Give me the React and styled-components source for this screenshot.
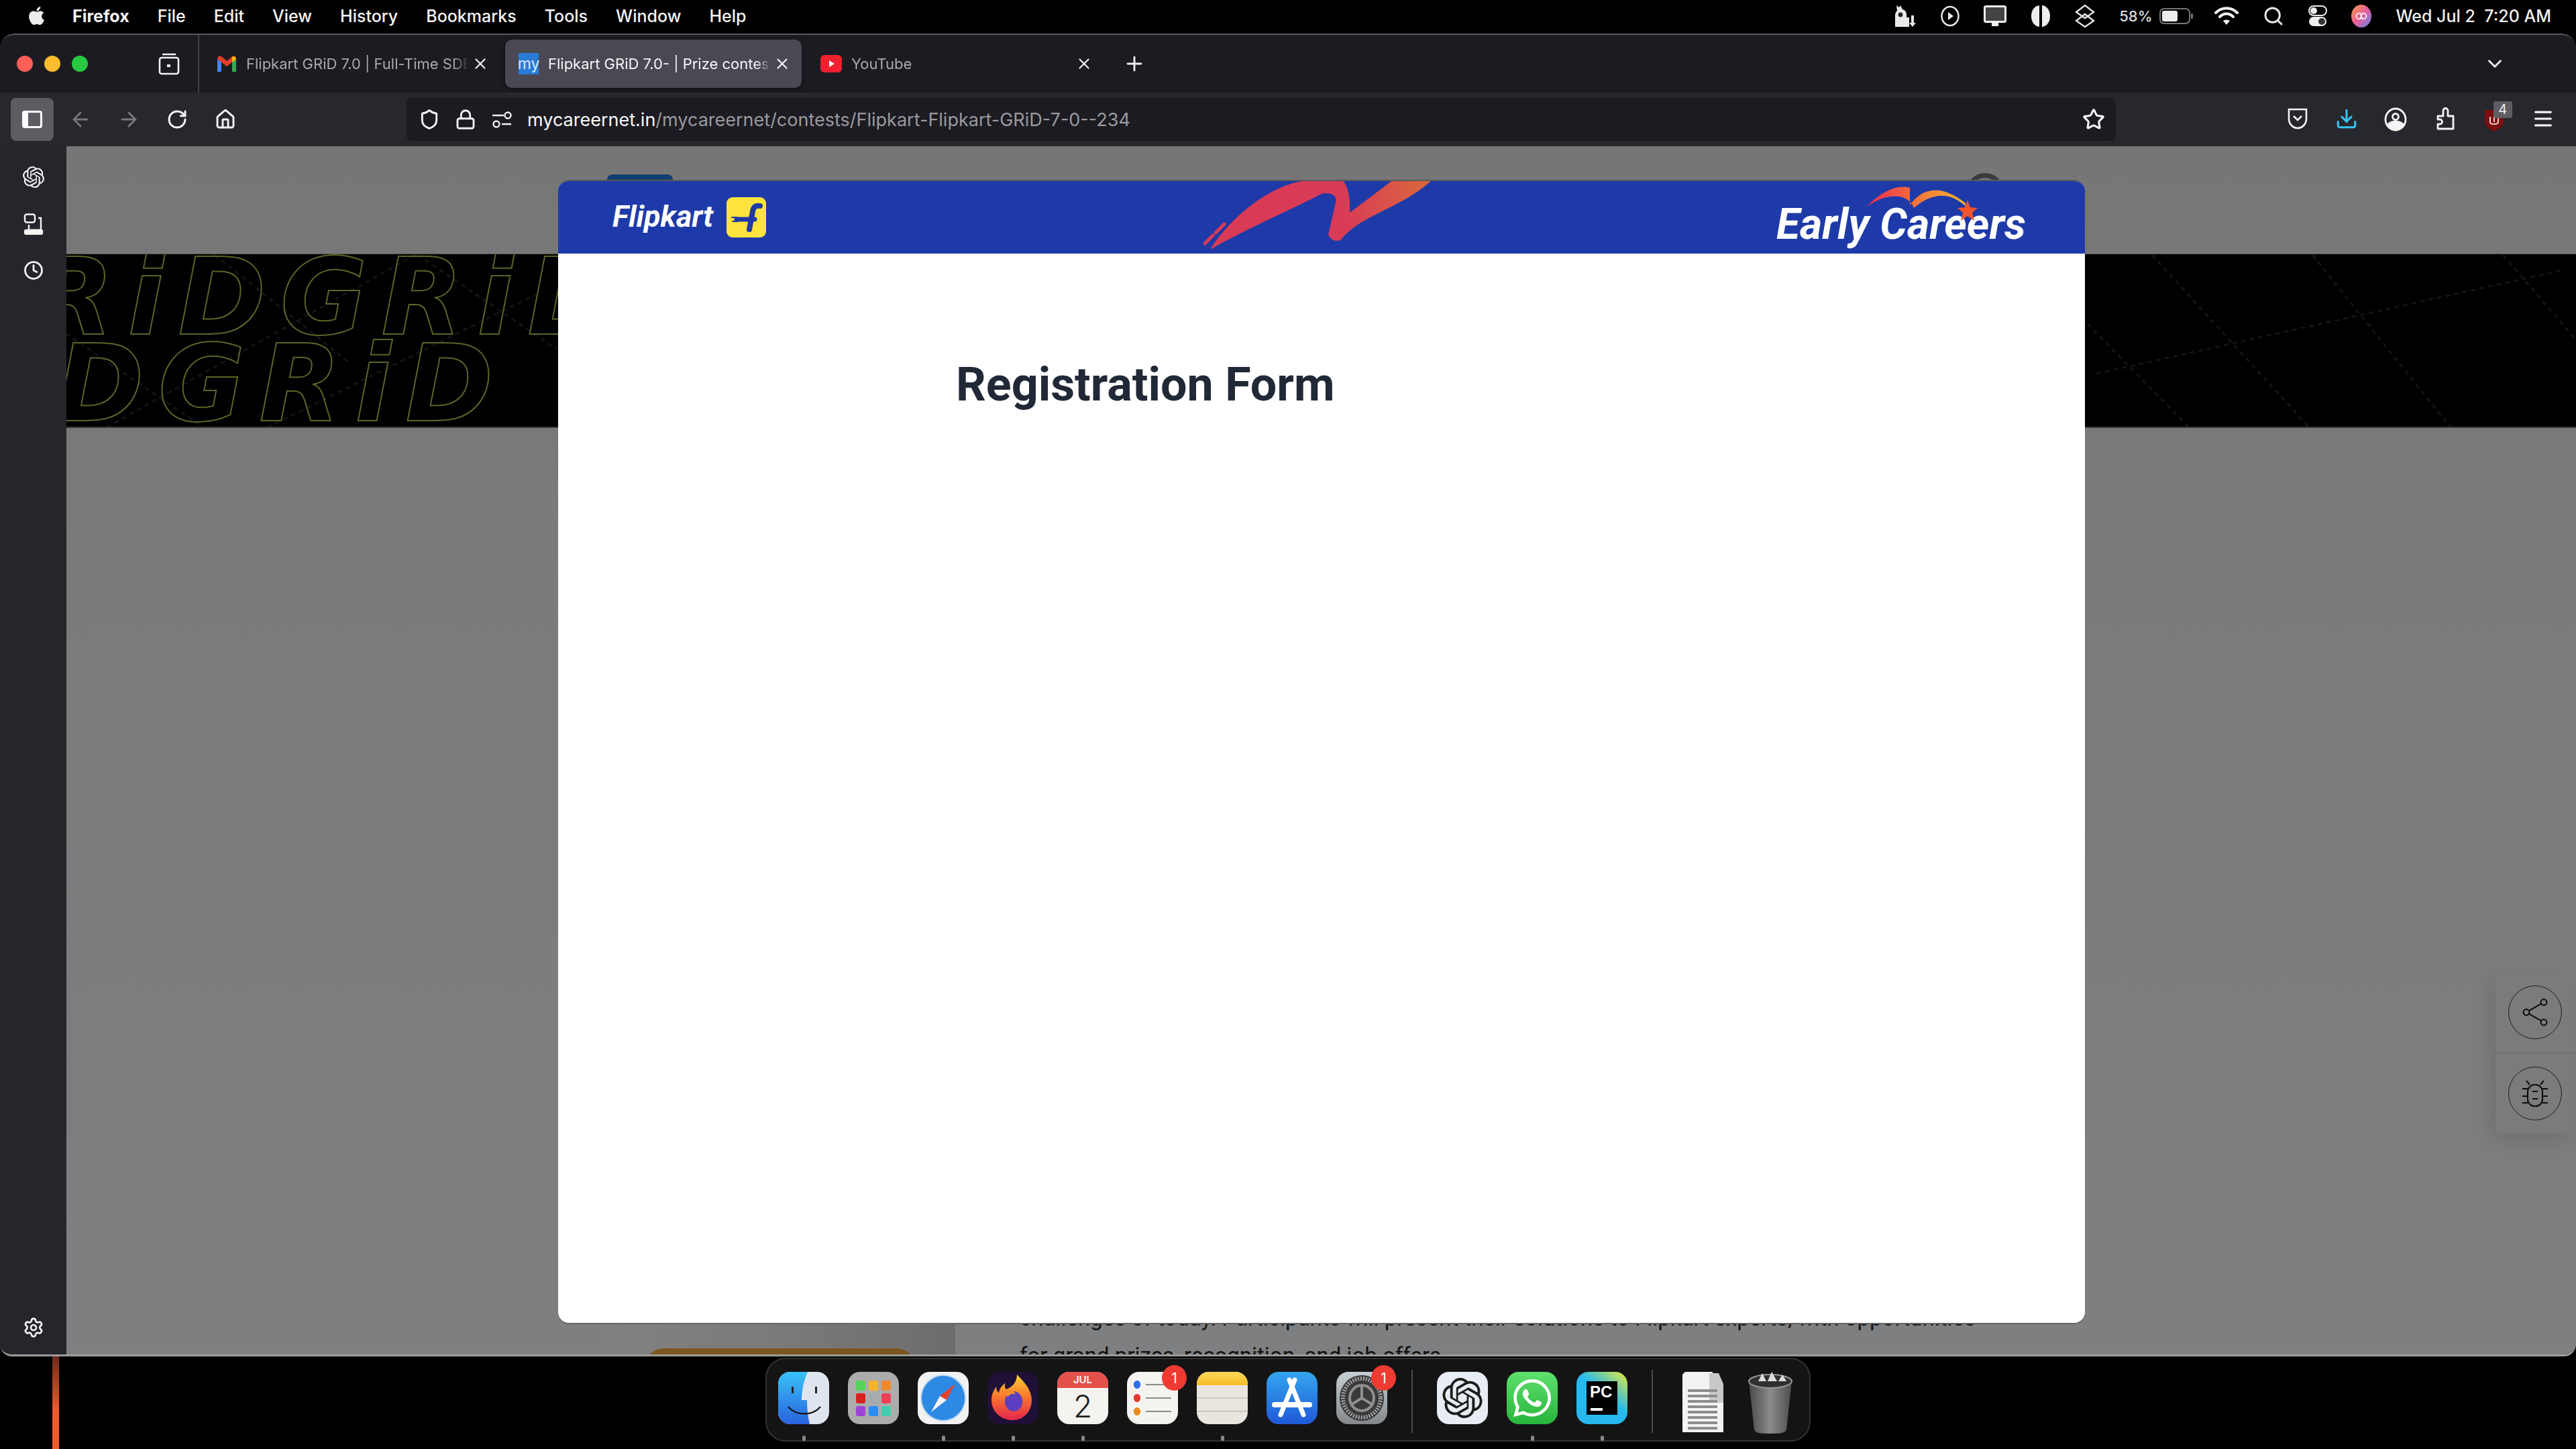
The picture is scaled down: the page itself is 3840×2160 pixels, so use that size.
import React from 'react'
import styled, { createGlobalStyle } from 'styled-components'
import {
  ArrowLeft, ArrowRight, RotateCw, Home, Shield, Lock, Star, X, Plus, ChevronDown,
  Download, Menu, Search, Clock, Settings,
} from 'lucide-react'
import { FaApple, FaWhatsapp } from 'react-icons/fa'
import { SiOpenai } from 'react-icons/si'

const GlobalStyle = createGlobalStyle`
  html, body { margin: 0; padding: 0; background: #000; }
  * { box-sizing: border-box; }
  body { font-family: Inter, "Liberation Sans", sans-serif; }
`

const Desktop = styled.div`
  width: 3840px;
  height: 2160px;
  background: #000;
  display: flex;
  flex-direction: column;
  overflow: hidden;
  position: relative;
`

// mac menu bar
const MenuBar = styled.div`
  height: 50px;
  flex: none;
  display: flex;
  align-items: center;
  padding-bottom: 3px;
  color: #f4f4f4;
  font-size: 25px;
  font-weight: 500;
`
const AppleMark = styled.div`
  width: 108px;
  padding-left: 39px;
  display: flex;
  font-size: 31px;
  color: #eee;
`
const MenuItems = styled.div`
  display: flex;
  gap: 42px;
`
const MenuLabel = styled.span`
  font-weight: ${p => (p.$bold ? 700 : 500)};
`
const StatusArea = styled.div`
  margin-left: auto;
  padding-right: 37px;
  display: flex;
  align-items: center;
  gap: 36px;
  color: #e8e8e8;
`
const BatteryGroup = styled.div`
  display: flex;
  align-items: center;
  gap: 11px;
  font-size: 22px;
  color: #ddd;
`
const BatteryBody = styled.div`
  width: 46px;
  height: 24px;
  border: 2px solid #777;
  border-radius: 7px;
  padding: 2px;
  position: relative;
  &::after {
    content: '';
    position: absolute;
    right: -6px;
    top: 6px;
    width: 3px;
    height: 8px;
    border-radius: 2px;
    background: #777;
  }
`
const BatteryFill = styled.div`
  height: 100%;
  border-radius: 3px;
  background: #eee;
`
const Clockface = styled.span`
  font-size: 25px;
  white-space: pre;
  color: #eee;
`

// browser window
const BrowserWindow = styled.div`
  flex: none;
  height: 1972px;
  display: flex;
  flex-direction: column;
  border-radius: 22px 22px 18px 18px;
  border-top: 2px solid #5a5a5e;
  border-bottom: 3px solid #9c9c9c;
  overflow: hidden;
  background: #1c1b22;
`
const TabStrip = styled.div`
  height: 86px;
  flex: none;
  display: flex;
  align-items: center;
  background: #1c1b22;
`
const WindowControls = styled.div`
  width: 297px;
  height: 100%;
  flex: none;
  border-right: 2px solid #3e3e44;
  display: flex;
  align-items: center;
  padding-left: 25px;
  gap: 17px;
`
const Light = styled.span`
  width: 24px;
  height: 24px;
  border-radius: 50%;
  background: ${p => p.$color};
`
const ViewIcon = styled.div`
  margin-left: 88px;
  display: flex;
  color: #f2f2f2;
`
const Tabs = styled.div`
  display: flex;
  align-items: center;
  gap: 8px;
  padding-left: 6px;
`
const Tab = styled.div`
  width: 442px;
  height: 72px;
  display: flex;
  align-items: center;
  padding: 0 16px 0 20px;
  gap: 14px;
  border-radius: 10px;
  font-size: 22px;
  background: ${p => (p.$active ? '#4a4953' : 'transparent')};
  color: ${p => (p.$active ? '#f6f6f6' : '#a9a9ad')};
  box-shadow: ${p => (p.$active ? '0 2px 6px rgba(0,0,0,.5)' : 'none')};
`
const TabTitle = styled.span`
  flex: 1;
  min-width: 0;
  overflow: hidden;
  white-space: nowrap;
  -webkit-mask-image: linear-gradient(90deg, #000 93%, transparent);
  mask-image: linear-gradient(90deg, #000 93%, transparent);
`
const TabClose = styled.span`
  margin-left: -10px;
  display: flex;
  color: #f2f2f2;
`
const FavSquare = styled.span`
  width: 30px;
  height: 32px;
  flex: none;
  display: flex;
  align-items: center;
  justify-content: center;
  color: #d8e8ff;
  font-size: 23px;
  background: #2a7bd6;
`
const NewTab = styled.div`
  margin-left: 29px;
  display: flex;
  color: #f0f0f0;
`
const TabListBtn = styled.div`
  margin-left: auto;
  padding-right: 104px;
  display: flex;
  color: #eee;
`
const Toolbar = styled.div`
  height: 80px;
  flex: none;
  display: flex;
  align-items: center;
  padding: 0 12px 0 16px;
  background: #27272e;
`
const SidebarToggle = styled.div`
  width: 64px;
  height: 64px;
  margin-right: 4px;
  border-radius: 8px;
  background: #5c5c63;
  display: flex;
  align-items: center;
  justify-content: center;
`
const ToggleGlyph = styled.div`
  width: 30px;
  height: 26px;
  border: 3px solid #fff;
  border-left-width: 9px;
  border-radius: 4px;
`
const ToolBtn = styled.div`
  width: 72px;
  display: flex;
  justify-content: center;
  color: ${p => (p.$dim ? '#77777d' : '#f4f4f4')};
`
const UrlBar = styled.div`
  flex: 1;
  height: 64px;
  margin: 0 234px;
  padding: 0 16px 0 7px;
  border-radius: 8px;
  background: #1c1b22;
  display: flex;
  align-items: center;
`
const UrlIcon = styled.div`
  width: 54px;
  display: flex;
  justify-content: center;
  color: #f0f0f0;
`
const UrlText = styled.div`
  margin-left: 11px;
  font-size: 27px;
  color: #9a9a9e;
  white-space: nowrap;
`
const UrlHost = styled.span`
  color: #f8f8f8;
`
const UrlStar = styled.div`
  margin-left: auto;
  display: flex;
  color: #f4f4f4;
`
const Extensions = styled.div`
  display: flex;
  flex: none;
  width: 440px;
`
const UblockBadge = styled.span`
  position: absolute;
  right: 10px;
  top: -9px;
  width: 28px;
  height: 25px;
  border-radius: 3px;
  background: #5f5f63;
  color: #eee;
  font-size: 20px;
  line-height: 25px;
  text-align: center;
`
const ExtBtn = styled.div`
  flex: 1;
  display: flex;
  justify-content: center;
  position: relative;
  color: ${p => p.$color || '#f4f4f4'};
`

const WindowBody = styled.div`
  flex: 1;
  min-height: 0;
  display: flex;
`
const Sidebar = styled.div`
  width: 99px;
  flex: none;
  background: #26252c;
  display: flex;
  flex-direction: column;
  align-items: center;
  padding-top: 30px;
  gap: 38px;
  color: #f4f4f4;
`
const SideGear = styled.div`
  margin-top: auto;
  padding-bottom: 24px;
  display: flex;
`

// dimmed page behind the modal
const Page = styled.div`
  flex: 1;
  min-width: 0;
  position: relative;
  overflow: hidden;
  display: flex;
  flex-direction: column;
  background: linear-gradient(#767676, #7a7a7a 30%, #7e7f81);
`
const PageTop = styled.div`
  height: 160px;
  flex: none;
  display: flex;
  align-items: flex-end;
  justify-content: space-between;
  padding: 0 853px 110px 806px;
`
const PeekLogo = styled.div`
  width: 98px;
  height: 8px;
  border-radius: 12px 12px 0 0;
  background: #0f3f6e;
`
const PeekAvatar = styled.div`
  width: 56px;
  height: 56px;
  margin-bottom: -46px;
  border: 7px solid #3a3a3a;
  border-radius: 50%;
`
const Hero = styled.div`
  height: 260px;
  flex: none;
  position: relative;
  overflow: hidden;
  background: #000;
  border-top: 1px solid #5c5c5c;
  border-bottom: 2px solid #3a3a3a;
`
const HeroLines = styled.svg`
  position: absolute;
  left: 0;
  top: 0;
`
const HeroRow = styled.div`
  height: 129px;
  margin-left: ${p => p.$shift}px;
  font-family: "DejaVu Sans", sans-serif;
  font-style: italic;
  font-weight: 700;
  font-size: 158px;
  line-height: 129px;
  letter-spacing: 21px;
  white-space: nowrap;
  color: transparent;
  -webkit-text-stroke: 2px #556727;
  position: relative;
`
const PageBody = styled.div`
  flex: 1;
  min-height: 0;
  display: flex;
  align-items: flex-end;
  padding-left: 804px;
  margin-bottom: -30px;
`
const SideCard = styled.div`
  width: 521px;
  height: 81px;
  flex: none;
  padding-left: 57px;
  background: linear-gradient(100deg, #818181, #7a7a7a 50%, #6c6c6c);
`
const OrangeBtn = styled.div`
  width: 406px;
  height: 60px;
  margin-top: 42px;
  border-radius: 30px 30px 0 0;
  background: #7c5620;
`
const BodyText = styled.div`
  margin-left: 96px;
  font-family: Roboto, sans-serif;
  font-size: 33px;
  line-height: 56px;
  color: #111;
  white-space: nowrap;
`
const FloatPanel = styled.div`
  position: absolute;
  right: 2px;
  top: 1231px;
  width: 118px;
  background: #7b7b7b;
  box-shadow: -6px 10px 30px rgba(0, 0, 0, .12);
`
const FloatCell = styled.div`
  height: 120px;
  display: flex;
  align-items: center;
  justify-content: center;
  & + & { border-top: 2px solid #707070; }
`
const FloatCircle = styled.div`
  width: 80px;
  height: 80px;
  border-radius: 50%;
  border: 1.5px solid #1b1b30;
  display: flex;
  align-items: center;
  justify-content: center;
`

// modal
const Modal = styled.div`
  position: absolute;
  left: 733px;
  top: 50px;
  width: 2276px;
  height: 1704px;
  background: #fff;
  border-radius: 16px;
  border-top: 2px solid #5a5a5a;
  overflow: hidden;
  box-shadow: 0 2px 0 #666;
`
const ModalHeader = styled.div`
  height: 108px;
  background: #1e3aa8;
  display: flex;
  align-items: center;
  padding: 0 88px 0 81px;
  position: relative;
  overflow: hidden;
`
const FlipkartWord = styled.span`
  font-family: Roboto, sans-serif;
  font-style: italic;
  font-weight: 700;
  font-size: 45px;
  margin-top: -3px;
  color: #fff;
`
const FlipkartBadge = styled.div`
  width: 59px;
  height: 60px;
  margin-left: 20px;
  border-radius: 9px;
  background: #ffe33f;
  display: flex;
`
const Swoosh = styled.svg`
  position: absolute;
  left: 952px;
  top: 0;
`
const CareersMark = styled.div`
  margin-left: auto;
  position: relative;
  padding-top: 22px;
  font-family: Roboto, sans-serif;
  font-style: italic;
  font-weight: 700;
  font-size: 64px;
  line-height: 70px;
  color: #fff;
  white-space: nowrap;
`
const CareersArc = styled.svg`
  position: absolute;
  left: 135px;
  top: 0;
`
const ModalContent = styled.div`
  padding: 153px 0 0 593px;
`
const Title = styled.h1`
  margin: 0;
  font-family: Roboto, sans-serif;
  font-weight: 700;
  font-size: 70px;
  line-height: 84px;
  color: #212936;
`

// dock
const DockArea = styled.div`
  flex: 1;
  display: flex;
  padding: 2px 0 0 1141px;
  position: relative;
`
const WallStripe = styled.div`
  position: absolute;
  left: 78px;
  top: 0;
  bottom: 0;
  width: 10px;
  background: linear-gradient(#6d2c1c, #f05a30 60%);
`
const Dock = styled.div`
  width: 1558px;
  height: 125px;
  padding: 19px 0 0 17px;
  display: flex;
  align-items: flex-start;
  gap: 28px;
  background: #141414;
  border: 2px solid #333;
  border-radius: 30px;
`
const DockItem = styled.div`
  width: ${p => p.$w || 76}px;
  flex: none;
  display: flex;
  flex-direction: column;
  align-items: center;
  position: relative;
`
const DockFace = styled.div`
  width: 100%;
  height: 78px;
  border-radius: 18px;
  overflow: hidden;
  display: flex;
  align-items: center;
  justify-content: center;
  background: ${p => p.$bg || 'transparent'};
  color: ${p => p.$color || '#fff'};
`
const RunDot = styled.span`
  width: 5px;
  height: 8px;
  margin-top: 17px;
  border-radius: 3px;
  background: #8a8a8a;
`
const NoticeBadge = styled.span`
  position: absolute;
  right: -13px;
  top: -10px;
  width: 37px;
  height: 38px;
  border-radius: 50%;
  background: #ee3b32;
  color: #fff;
  font-size: 21px;
  display: flex;
  align-items: center;
  justify-content: center;
`
const DockRule = styled.div`
  width: 2px;
  height: 94px;
  margin: -3px 8px 0 8px;
  background: #4a4a4a;
  flex: none;
`
const CalFace = styled.div`
  width: 100%;
  height: 100%;
  display: flex;
  flex-direction: column;
  background: #f4f3f0;
  color: #222;
`
const CalMonth = styled.div`
  height: 24px;
  background: #e5504a;
  color: #fff;
  font-size: 15px;
  font-weight: 600;
  text-align: center;
  line-height: 24px;
`
const CalDay = styled.div`
  flex: 1;
  font-size: 46px;
  font-weight: 300;
  text-align: center;
  line-height: 54px;
`
const PcSquare = styled.div`
  width: 46px;
  height: 50px;
  background: #000;
  color: #fff;
  font-family: "Liberation Sans", sans-serif;
  font-weight: 700;
  font-size: 24px;
  line-height: 26px;
  padding: 3px 0 0 5px;
  position: relative;
  &::after {
    content: '';
    position: absolute;
    left: 6px;
    bottom: 6px;
    width: 18px;
    height: 4px;
    background: #fff;
  }
`

const OllamaIcon = () => (
  <svg width="36" height="34" viewBox="0 0 36 34" fill="#e8e8e8">
    <path d="M4 33V16c0-4 2-6 3-7L6 1l4 3 2-3 3 6c4 1 6 4 6 8v4h4v14z" />
    <path d="M28 16v11h-3l5 6 5-6h-3V16z" />
    <circle cx="12" cy="15" r="3.4" fill="#222" />
  </svg>
)
const PlayCircle = () => (
  <svg width="28" height="32" viewBox="0 0 28 32" fill="none" stroke="#e8e8e8" strokeWidth="2.5">
    <ellipse cx="14" cy="16" rx="12.5" ry="14" />
    <path d="M11 10l8 6-8 6z" fill="#e8e8e8" stroke="none" />
  </svg>
)
const DisplayIcon = () => (
  <svg width="34" height="32" viewBox="0 0 34 32">
    <rect x="1.5" y="1.5" width="31" height="23" rx="2" fill="#444" stroke="#eee" strokeWidth="3" />
    <rect x="12" y="25" width="10" height="6" fill="#eee" />
  </svg>
)
const ContrastIcon = () => (
  <svg width="30" height="34" viewBox="0 0 30 34" fill="#eee">
    <path d="M13 1C5 2 1 9 1 17s4 15 12 16z" />
    <path d="M17 1c8 1 12 8 12 16s-4 15-12 16z" />
  </svg>
)
const LayerDiamonds = () => (
  <svg width="30" height="34" viewBox="0 0 30 34" fill="none" stroke="#e4e4e4" strokeWidth="2.4">
    <path d="M15 1l13 10-13 9L2 11z" />
    <path d="M15 14l13 10-13 9L2 24z" />
  </svg>
)
const WifiIcon = () => (
  <svg width="36" height="28" viewBox="0 0 36 28" fill="none" stroke="#f2f2f2" strokeWidth="4" strokeLinecap="round">
    <path d="M2 9c9-9 23-9 32 0" />
    <path d="M8 15c6-6 14-6 20 0" />
    <path d="M18 27l-5-6c3-2 7-2 10 0z" fill="#f2f2f2" stroke="none" />
  </svg>
)
const ControlCenter = () => (
  <svg width="28" height="32" viewBox="0 0 28 32">
    <rect x="1" y="1" width="26" height="14" rx="7" fill="none" stroke="#eee" strokeWidth="2" />
    <circle cx="8" cy="8" r="5" fill="#eee" />
    <rect x="1" y="17" width="26" height="14" rx="7" fill="#eee" />
    <circle cx="20" cy="24" r="5" fill="#333" />
  </svg>
)
const SiriIcon = () => (
  <svg width="30" height="34" viewBox="0 0 30 34">
    <defs>
      <linearGradient id="siri" x1="0" y1="0" x2="1" y2="1">
        <stop offset="0" stopColor="#f7a13c" />
        <stop offset=".5" stopColor="#ea5c9c" />
        <stop offset="1" stopColor="#5a8cf0" />
      </linearGradient>
    </defs>
    <ellipse cx="15" cy="17" rx="15" ry="17" fill="url(#siri)" />
    <path d="M7 17c3-6 7-6 8 0s5 6 8 0c-3-6-7-6-8 0s-5 6-8 0z" fill="none" stroke="#fff" strokeWidth="1.6" />
  </svg>
)
const ViewGlyph = () => (
  <svg width="32" height="34" viewBox="0 0 32 34" fill="none" stroke="#f2f2f2" strokeWidth="2.6">
    <rect x="2" y="8" width="28" height="24" rx="3" />
    <path d="M6 3h20" />
    <rect x="13" y="18" width="5" height="4" fill="#f2f2f2" stroke="none" />
  </svg>
)
const GmailFav = () => (
  <svg width="30" height="26" viewBox="0 0 30 26">
    <path d="M1 25V6l6 5v14z" fill="#4285f4" />
    <path d="M23 25V11l6-5v19z" fill="#34a853" />
    <path d="M1 6c0-4 4-6 7-3l7 6 7-6c3-3 7-1 7 3l-14 11z" fill="#e43e2b" />
    <path d="M23 11V3c3-2 6 0 6 3z" fill="#f6bc0e" />
  </svg>
)
const YoutubeFav = () => (
  <svg width="32" height="26" viewBox="0 0 32 26">
    <rect width="32" height="26" rx="6" fill="#f0202e" />
    <path d="M13 8l8 5-8 5z" fill="#fff" />
  </svg>
)
const SiteSettingsIcon = () => (
  <svg width="30" height="28" viewBox="0 0 30 28" fill="none" stroke="#f0f0f0" strokeWidth="2.4">
    <path d="M1 8h17M15 21h14" />
    <circle cx="24" cy="8" r="4.5" />
    <circle cx="7" cy="21" r="4.5" />
  </svg>
)
const PocketIcon = () => (
  <svg width="30" height="34" viewBox="0 0 30 34" fill="none" stroke="#f4f4f4" strokeWidth="2.6">
    <path d="M2 3h26v14c0 8-6 14-13 14S2 25 2 17z" />
    <path d="M9 13l6 6 6-6" />
  </svg>
)
const AccountIcon = () => (
  <svg width="34" height="36" viewBox="0 0 34 36" fill="none" stroke="#f4f4f4" strokeWidth="2.8">
    <ellipse cx="17" cy="18" rx="15" ry="16" />
    <circle cx="17" cy="14" r="4.5" />
    <path d="M6 25c6-5 16-5 22 0-5 9-17 9-22 0z" fill="#f4f4f4" />
  </svg>
)
const PuzzleIcon = () => (
  <svg width="28" height="34" viewBox="0 0 28 34" fill="none" stroke="#f4f4f4" strokeWidth="2.8" strokeLinejoin="round">
    <path d="M3 13h8V5a3.5 3.5 0 0 1 7 0v8h8v19H3v-7h3a3.5 3.5 0 0 0 0-7H3z" />
  </svg>
)
const UblockShield = () => (
  <svg width="30" height="36" viewBox="0 0 30 36">
    <path d="M1 4h28v18c0 6-8 11-14 14C9 33 1 28 1 22z" fill="#7a0f0f" />
    <path d="M9 14v8c0 4 12 4 12 0v-8M15 14v8" fill="none" stroke="#f0d0d0" strokeWidth="2" />
  </svg>
)
const ShareGlyph = () => (
  <svg width="40" height="42" viewBox="0 0 40 42" fill="none" stroke="#0a0a0a" strokeWidth="2">
    <circle cx="7" cy="21" r="4.4" />
    <circle cx="33" cy="6" r="4.4" />
    <circle cx="33" cy="36" r="4.4" />
    <path d="M11 18.6L29 8.4M11 23.4l18 10.2" />
  </svg>
)
const BugGlyph = () => (
  <svg width="38" height="42" viewBox="0 0 38 42" fill="none" stroke="#0a0a0a" strokeWidth="2">
    <rect x="8" y="8" width="22" height="32" rx="10.5" />
    <path d="M11 8L6 2M27 8l5-6" />
    <path d="M0 14h8M0 25h8M0 35h8M30 14h8M30 25h8M30 35h8M15 18h8M15 29h8" />
  </svg>
)
const AssistantGlyph = () => (
  <svg width="30" height="32" viewBox="0 0 30 32" fill="none" stroke="#f4f4f4" strokeWidth="2.4">
    <rect x="2" y="1.5" width="15" height="12" rx="3" />
    <path d="M22 7h4v18H8v-8" />
    <rect x="2" y="25" width="26" height="6" rx="2" fill="#f4f4f4" />
  </svg>
)

const FinderFace = () => (
  <svg width="76" height="78" viewBox="0 0 76 78">
    <defs>
      <linearGradient id="fnd" x1="0" y1="0" x2="0" y2="1">
        <stop offset="0" stopColor="#37c2f7" />
        <stop offset="1" stopColor="#2a63e0" />
      </linearGradient>
    </defs>
    <rect width="76" height="78" fill="#dfe5ee" />
    <path d="M0 0h44c-6 14-9 28-9 42h8c0 12 1 24 4 36H0z" fill="url(#fnd)" />
    <rect x="20" y="22" width="3" height="10" fill="#222" />
    <rect x="55" y="22" width="3" height="10" fill="#222" />
    <path d="M15 52c12 14 36 14 48 0" fill="none" stroke="#1a1a1a" strokeWidth="2.4" />
  </svg>
)
const LaunchFace = () => {
  const colors = ['#56d45a', '#f4b52e', '#f0892c', '#d5241f', '#a4acb0', '#f23f58', '#9b43d6', '#2a8cf2', '#3fcfb0']
  return (
    <svg width="76" height="78" viewBox="0 0 76 78">
      <rect width="76" height="78" fill="#acacac" />
      {colors.map((c, i) => (
        <rect key={c} x={12 + (i % 3) * 19} y={13 + Math.floor(i / 3) * 19} width="14" height="15" rx="3" fill={c} />
      ))}
    </svg>
  )
}
const SafariFace = () => (
  <svg width="76" height="78" viewBox="0 0 76 78">
    <rect width="76" height="78" fill="#f2f2f2" />
    <ellipse cx="38" cy="39" rx="33" ry="34" fill="#2d8ae4" stroke="#bcd8f2" strokeWidth="2" />
    <path d="M56 18L33 36l10 6z" fill="#e8402f" />
    <path d="M20 60l13-24 10 6z" fill="#f4f4f4" />
  </svg>
)
const FirefoxFace = () => (
  <svg width="76" height="78" viewBox="0 0 76 78">
    <defs>
      <linearGradient id="ffx" x1="0" y1="0" x2="0" y2="1">
        <stop offset="0" stopColor="#fbd135" />
        <stop offset=".5" stopColor="#f8742c" />
        <stop offset="1" stopColor="#e3254e" />
      </linearGradient>
    </defs>
    <rect width="76" height="78" fill="#1f1038" />
    <path d="M44 4c12 12 22 24 22 38 0 18-13 30-29 30S6 60 6 42c0-8 3-14 7-20 0 5 2 8 4 9 1-6 5-12 10-14-2 4-1 7 1 9 8-3 16-10 16-22z" fill="url(#ffx)" />
    <ellipse cx="39" cy="44" rx="13" ry="15" fill="#5b3fc0" />
    <path d="M26 30c6-5 14-3 16 3-6-1-10 1-12 5z" fill="#f08a2c" />
  </svg>
)
const RemindersFace = () => (
  <svg width="76" height="78" viewBox="0 0 76 78">
    <rect width="76" height="78" fill="#f4f3f0" />
    {[['#2f6fe8', 19], ['#e33b34', 39], ['#ec8a1e', 59]].map(([c, y]) => (
      <g key={c}>
        <ellipse cx="15" cy={y} rx="6" ry="7" fill={c} stroke="#fff" strokeWidth="1.5" />
        <rect x="28" y={y - 1} width="38" height="2" fill="#8a8a8a" />
      </g>
    ))}
  </svg>
)
const NotesFace = () => (
  <svg width="76" height="78" viewBox="0 0 76 78">
    <defs>
      <linearGradient id="nts" x1="0" y1="0" x2="0" y2="1">
        <stop offset="0" stopColor="#fdd95c" />
        <stop offset="1" stopColor="#f7bd28" />
      </linearGradient>
    </defs>
    <rect width="76" height="78" fill="#e9e6df" />
    <rect width="76" height="20" fill="url(#nts)" />
    <rect y="38" width="76" height="2" fill="#cfccc6" />
    <rect y="58" width="76" height="1.5" fill="#bdbab4" />
  </svg>
)
const StoreFace = () => (
  <svg width="76" height="78" viewBox="0 0 76 78" fill="none" stroke="#fff" strokeLinecap="round">
    <path d="M42 12L21 64M34 12l21 52" strokeWidth="7" />
    <path d="M12 49h52" strokeWidth="8" />
  </svg>
)
const SettingsFace = () => (
  <svg width="76" height="78" viewBox="0 0 76 78">
    <defs>
      <linearGradient id="sts" x1="0" y1="0" x2="0" y2="1">
        <stop offset="0" stopColor="#c5cfd4" />
        <stop offset="1" stopColor="#85888a" />
      </linearGradient>
    </defs>
    <rect width="76" height="78" fill="url(#sts)" />
    <ellipse cx="38" cy="39" rx="33" ry="34" fill="#3a3a3c" />
    <ellipse cx="38" cy="39" rx="28" ry="29" fill="none" stroke="#a5a5a5" strokeWidth="6" strokeDasharray="2 2" />
    <ellipse cx="38" cy="39" rx="18" ry="19" fill="none" stroke="#8f8f8f" strokeWidth="4" />
    <path d="M38 39V20M38 39L22 49M38 39l16 10" stroke="#8f8f8f" strokeWidth="4" />
  </svg>
)
const DocFace = () => (
  <svg width="61" height="90" viewBox="0 0 61 90">
    <path d="M4 0h40l17 18v72H0V4z" fill="#f3f3f3" />
    <path d="M40 2h14l7 16v28H40z" fill="#c9c9c9" />
    {[26, 34, 42, 50, 58, 66, 74, 82].map(y => (
      <rect key={y} x="8" y={y} width="44" height="4" fill="#8d8d8d" />
    ))}
  </svg>
)
const TrashFace = () => (
  <svg width="68" height="92" viewBox="0 0 68 92">
    <defs>
      <linearGradient id="trs" x1="0" y1="0" x2="1" y2="0">
        <stop offset="0" stopColor="#4a4a4a" />
        <stop offset=".5" stopColor="#8a8a8a" />
        <stop offset="1" stopColor="#4c4c4c" />
      </linearGradient>
    </defs>
    <path d="M2 14h64l-8 72c-1 5-8 6-24 6s-23-1-24-6z" fill="url(#trs)" />
    <ellipse cx="34" cy="14" rx="32" ry="10" fill="#303030" stroke="#999" strokeWidth="2" />
    <path d="M16 14l6-12 6 12zM30 14l6-14 8 14zM46 14l6-10 6 10z" fill="#ddd" />
  </svg>
)

const MENU = ['File', 'Edit', 'View', 'History', 'Bookmarks', 'Tools', 'Window', 'Help']

const HERO_LINES = [
  [3109, 1, 3343, 258], [3348, 1, 3554, 258], [3632, 1, 3738, 124], [3013, 104, 3164, 258],
  [3026, 178, 3724, 23], [-1, 118, 204, 258], [524, 1, 730, 141], [221, 1, 420, 160],
  [60, 258, 520, 1], [300, 258, 700, 60],
]

const App = () => {
  return (
    <Desktop>
      <GlobalStyle />
      <MenuBar>
        <AppleMark><FaApple /></AppleMark>
        <MenuItems>
          <MenuLabel $bold>Firefox</MenuLabel>
          {MENU.map(m => <MenuLabel key={m}>{m}</MenuLabel>)}
        </MenuItems>
        <StatusArea>
          <OllamaIcon />
          <PlayCircle />
          <DisplayIcon />
          <ContrastIcon />
          <LayerDiamonds />
          <BatteryGroup>
            58%
            <BatteryBody><BatteryFill style={{ width: '58%' }} /></BatteryBody>
          </BatteryGroup>
          <WifiIcon />
          <Search size={32} strokeWidth={2.2} />
          <ControlCenter />
          <SiriIcon />
          <Clockface>Wed Jul 2  7:20 AM</Clockface>
        </StatusArea>
      </MenuBar>

      <BrowserWindow>
        <TabStrip>
          <WindowControls>
            <Light $color="#ff5f57" />
            <Light $color="#febc2e" />
            <Light $color="#28c840" />
            <ViewIcon><ViewGlyph /></ViewIcon>
          </WindowControls>
          <Tabs>
            <Tab>
              <GmailFav />
              <TabTitle>Flipkart GRiD 7.0 | Full-Time SDE</TabTitle>
              <TabClose><X size={26} /></TabClose>
            </Tab>
            <Tab $active>
              <FavSquare>my</FavSquare>
              <TabTitle>Flipkart GRiD 7.0- | Prize contest</TabTitle>
              <TabClose><X size={26} /></TabClose>
            </Tab>
            <Tab>
              <YoutubeFav />
              <TabTitle>YouTube</TabTitle>
              <TabClose><X size={26} /></TabClose>
            </Tab>
          </Tabs>
          <NewTab><Plus size={34} strokeWidth={2} /></NewTab>
          <TabListBtn><ChevronDown size={34} strokeWidth={2} /></TabListBtn>
        </TabStrip>

        <Toolbar>
          <SidebarToggle><ToggleGlyph /></SidebarToggle>
          <ToolBtn $dim><ArrowLeft size={34} strokeWidth={2} /></ToolBtn>
          <ToolBtn $dim><ArrowRight size={34} strokeWidth={2} /></ToolBtn>
          <ToolBtn><RotateCw size={32} strokeWidth={2.2} /></ToolBtn>
          <ToolBtn><Home size={32} strokeWidth={2.2} /></ToolBtn>
          <UrlBar>
            <UrlIcon><Shield size={32} strokeWidth={2.2} /></UrlIcon>
            <UrlIcon><Lock size={32} strokeWidth={2.2} /></UrlIcon>
            <UrlIcon><SiteSettingsIcon /></UrlIcon>
            <UrlText>
              <UrlHost>mycareernet.in</UrlHost>/mycareernet/contests/Flipkart-Flipkart-GRiD-7-0--234
            </UrlText>
            <UrlStar><Star size={34} strokeWidth={2.2} /></UrlStar>
          </UrlBar>
          <Extensions>
            <ExtBtn><PocketIcon /></ExtBtn>
            <ExtBtn $color="#35c5f0"><Download size={34} strokeWidth={2.2} /></ExtBtn>
            <ExtBtn><AccountIcon /></ExtBtn>
            <ExtBtn><PuzzleIcon /></ExtBtn>
            <ExtBtn>
              <UblockShield />
              <UblockBadge>4</UblockBadge>
            </ExtBtn>
            <ExtBtn><Menu size={34} strokeWidth={2.2} /></ExtBtn>
          </Extensions>
        </Toolbar>

        <WindowBody>
          <Sidebar>
            <SiOpenai size={32} />
            <AssistantGlyph />
            <Clock size={30} strokeWidth={2.2} />
            <SideGear><Settings size={32} strokeWidth={2} /></SideGear>
          </Sidebar>

          <Page>
            <PageTop>
              <PeekLogo />
              <PeekAvatar />
            </PageTop>
            <Hero>
              <HeroLines width="3741" height="260" viewBox="0 0 3741 260">
                {HERO_LINES.map(([x1, y1, x2, y2]) => (
                  <line key={`${x1}-${y1}`} x1={x1} y1={y1} x2={x2} y2={y2} stroke="#141414" strokeWidth="3" strokeDasharray="7 6" />
                ))}
              </HeroLines>
              <HeroRow $shift={-202}>GRiDGRiDGRiD</HeroRow>
              <HeroRow $shift={-384}>GRiDGRiD</HeroRow>
            </Hero>
            <PageBody>
              <SideCard><OrangeBtn /></SideCard>
              <BodyText>
                challenges of today. Participants will present their solutions to Flipkart experts, with opportunities
                <br />
                for grand prizes, recognition, and job offers.
              </BodyText>
            </PageBody>
            <FloatPanel>
              <FloatCell><FloatCircle><ShareGlyph /></FloatCircle></FloatCell>
              <FloatCell><FloatCircle><BugGlyph /></FloatCircle></FloatCell>
            </FloatPanel>
            <Modal>
              <ModalHeader>
                <FlipkartWord>Flipkart</FlipkartWord>
                <FlipkartBadge>
                  <svg width="59" height="60" viewBox="0 0 59 60" fill="none" stroke="#1e3aa8" strokeLinecap="round">
                    <path d="M50 13c-7-1-10 2-11 8l-5 27" strokeWidth="8" />
                    <path d="M15 33h27" strokeWidth="7" />
                    <path d="M8 30h8M9 36h8" strokeWidth="2" />
                  </svg>
                </FlipkartBadge>
                <Swoosh width="360" height="108" viewBox="1784 270 360 108">
                  <defs>
                    <linearGradient id="swoosh" x1="0" y1="0" x2="1" y2="0">
                      <stop offset=".6" stopColor="#d93a56" />
                      <stop offset="1" stopColor="#d96a3c" />
                    </linearGradient>
                  </defs>
                  <path
                    d="M1804 372C1830 330 1895 268 1961 268L2001 268C2010 278 2013 295 2012 317L2077 268L2135 268C2090 310 2030 320 2001 355C1998 360 1986 362 1980 350L1992 298C1990 288 1978 286 1968 290C1930 310 1860 340 1804 372Z"
                    fill="url(#swoosh)"
                  />
                  <path d="M1796 363l12-12M1812 347l13-13" stroke="#d93a56" strokeWidth="5" strokeLinecap="round" />
                </Swoosh>
                <CareersMark>
                  Early Careers
                  <CareersArc width="170" height="60" viewBox="0 0 170 60">
                    <defs>
                      <linearGradient id="arc" x1="0" y1="0" x2="1" y2="0">
                        <stop offset="0" stopColor="#ee2b4e" />
                        <stop offset="1" stopColor="#f8b92c" />
                      </linearGradient>
                    </defs>
                    <path d="M0 30C20 8 46-4 64 2L64 28C80 4 108-6 146 24L148 30C124 8 98 8 70 32C62 10 30 8 0 30Z" fill="url(#arc)" />
                    <path d="M150 20l4 11 11 1-8 7 3 12-10-7-10 7 3-12-8-7 11-1z" fill="#f0542e" />
                  </CareersArc>
                </CareersMark>
              </ModalHeader>
              <ModalContent>
                <Title>Registration Form</Title>
              </ModalContent>
            </Modal>
          </Page>
        </WindowBody>
      </BrowserWindow>

      <DockArea>
        <WallStripe />
        <Dock>
          <DockItem><DockFace><FinderFace /></DockFace><RunDot /></DockItem>
          <DockItem><DockFace><LaunchFace /></DockFace></DockItem>
          <DockItem><DockFace><SafariFace /></DockFace><RunDot /></DockItem>
          <DockItem><DockFace><FirefoxFace /></DockFace><RunDot /></DockItem>
          <DockItem>
            <DockFace>
              <CalFace>
                <CalMonth>JUL</CalMonth>
                <CalDay>2</CalDay>
              </CalFace>
            </DockFace>
            <RunDot />
          </DockItem>
          <DockItem>
            <DockFace><RemindersFace /></DockFace>
            <NoticeBadge>1</NoticeBadge>
          </DockItem>
          <DockItem><DockFace><NotesFace /></DockFace><RunDot /></DockItem>
          <DockItem><DockFace $bg="linear-gradient(#33a6ee, #1f58d8)"><StoreFace /></DockFace></DockItem>
          <DockItem>
            <DockFace><SettingsFace /></DockFace>
            <NoticeBadge>1</NoticeBadge>
          </DockItem>
          <DockRule />
          <DockItem><DockFace $bg="#e8edf5" $color="#1c1c1c"><SiOpenai size={60} /></DockFace></DockItem>
          <DockItem><DockFace $bg="linear-gradient(#5fe06c, #27b53c)"><FaWhatsapp size={64} /></DockFace><RunDot /></DockItem>
          <DockItem>
            <DockFace $bg="linear-gradient(40deg, #27b9ee 55%, #e6ea3c)"><PcSquare>PC</PcSquare></DockFace>
            <RunDot />
          </DockItem>
          <DockRule />
          <DockItem $w={77}><DocFace /></DockItem>
          <DockItem $w={68}><TrashFace /></DockItem>
        </Dock>
      </DockArea>
    </Desktop>
  )
}

export default App
